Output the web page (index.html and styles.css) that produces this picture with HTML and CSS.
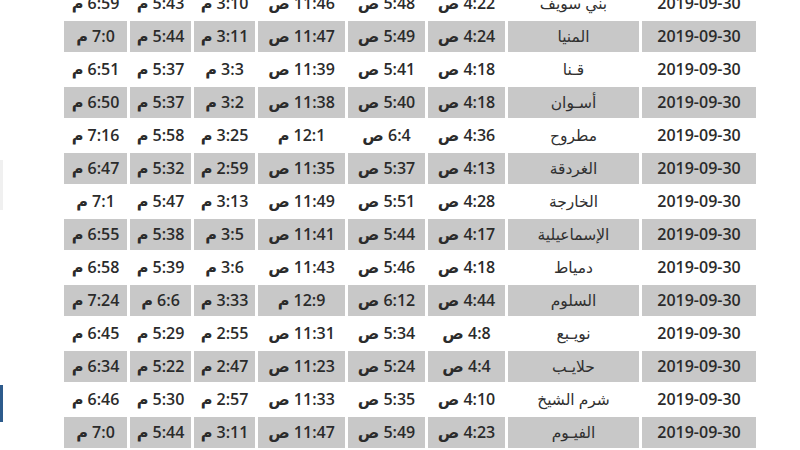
FILE: index.html
```html
<!DOCTYPE html>
<html lang="ar">
<head>
<meta charset="utf-8">
<link rel="stylesheet" href="styles.css">
</head>
<body>
<div class="page">
  <aside class="edge">
    <div class="edge-faint"></div>
    <div class="edge-blue"></div>
  </aside>
  <table class="times" dir="rtl">
    <colgroup>
      <col class="c-date"><col class="c-city"><col class="c-fajr"><col class="c-sun"><col class="c-dhuhr"><col class="c-asr"><col class="c-mag"><col class="c-isha">
    </colgroup>
    <tbody>
      <tr><td>2019-09-30</td><td class="city">بني سويف</td><td>4:22 ص</td><td>5:48 ص</td><td>11:46 ص</td><td>3:10 م</td><td>5:43 م</td><td>6:59 م</td></tr>
      <tr class="alt"><td>2019-09-30</td><td class="city">المنيا</td><td>4:24 ص</td><td>5:49 ص</td><td>11:47 ص</td><td>3:11 م</td><td>5:44 م</td><td>7:0 م</td></tr>
      <tr><td>2019-09-30</td><td class="city">قـنا</td><td>4:18 ص</td><td>5:41 ص</td><td>11:39 ص</td><td>3:3 م</td><td>5:37 م</td><td>6:51 م</td></tr>
      <tr class="alt"><td>2019-09-30</td><td class="city">أسـوان</td><td>4:18 ص</td><td>5:40 ص</td><td>11:38 ص</td><td>3:2 م</td><td>5:37 م</td><td>6:50 م</td></tr>
      <tr><td>2019-09-30</td><td class="city">مطروح</td><td>4:36 ص</td><td>6:4 ص</td><td>12:1 م</td><td>3:25 م</td><td>5:58 م</td><td>7:16 م</td></tr>
      <tr class="alt"><td>2019-09-30</td><td class="city">الغردقة</td><td>4:13 ص</td><td>5:37 ص</td><td>11:35 ص</td><td>2:59 م</td><td>5:32 م</td><td>6:47 م</td></tr>
      <tr><td>2019-09-30</td><td class="city">الخارجة</td><td>4:28 ص</td><td>5:51 ص</td><td>11:49 ص</td><td>3:13 م</td><td>5:47 م</td><td>7:1 م</td></tr>
      <tr class="alt"><td>2019-09-30</td><td class="city">الإسماعيلية</td><td>4:17 ص</td><td>5:44 ص</td><td>11:41 ص</td><td>3:5 م</td><td>5:38 م</td><td>6:55 م</td></tr>
      <tr><td>2019-09-30</td><td class="city">دمياط</td><td>4:18 ص</td><td>5:46 ص</td><td>11:43 ص</td><td>3:6 م</td><td>5:39 م</td><td>6:58 م</td></tr>
      <tr class="alt"><td>2019-09-30</td><td class="city">السلوم</td><td>4:44 ص</td><td>6:12 ص</td><td>12:9 م</td><td>3:33 م</td><td>6:6 م</td><td>7:24 م</td></tr>
      <tr><td>2019-09-30</td><td class="city">نويـبع</td><td>4:8 ص</td><td>5:34 ص</td><td>11:31 ص</td><td>2:55 م</td><td>5:29 م</td><td>6:45 م</td></tr>
      <tr class="alt"><td>2019-09-30</td><td class="city">حلايـب</td><td>4:4 ص</td><td>5:24 ص</td><td>11:23 ص</td><td>2:47 م</td><td>5:22 م</td><td>6:34 م</td></tr>
      <tr><td>2019-09-30</td><td class="city">شرم الشيخ</td><td>4:10 ص</td><td>5:35 ص</td><td>11:33 ص</td><td>2:57 م</td><td>5:30 م</td><td>6:46 م</td></tr>
      <tr class="alt"><td>2019-09-30</td><td class="city">الفيـوم</td><td>4:23 ص</td><td>5:49 ص</td><td>11:47 ص</td><td>3:11 م</td><td>5:44 م</td><td>7:0 م</td></tr>
    </tbody>
  </table>
</div>
</body>
</html>
```

FILE: styles.css
```css
html, body {
  margin: 0;
  padding: 0;
  background: #ffffff;
  overflow: hidden;
}

.page {
  display: flex;
  align-items: flex-start;
  width: 800px;
  height: 450px;
  overflow: hidden;
}

.edge {
  width: 3px;
  flex: 0 0 3px;
  display: flex;
  flex-direction: column;
}

.edge-faint {
  margin-top: 160px;
  height: 50px;
  background: #f0f0f0;
}

.edge-blue {
  margin-top: 175px;
  height: 37px;
  background: #2d5b8c;
}

.times {
  margin-top: -14px;
  margin-left: 58px;
  border-collapse: separate;
  border-spacing: 3px 2px;
  table-layout: fixed;
  width: 698px;
  font-family: "Open Sans", "DejaVu Sans", sans-serif;
  font-weight: 600;
  font-size: 16px;
  color: #2b2b2b;
}

.c-date { width: 114px; }
.c-city { width: 131px; }
.c-fajr { width: 77px; }
.c-sun { width: 77px; }
.c-dhuhr { width: 87px; }
.c-asr { width: 61px; }
.c-mag { width: 61px; }
.c-isha { width: 63px; }

.times td {
  height: 31px;
  padding: 0;
  text-align: center;
  vertical-align: middle;
  white-space: nowrap;
  line-height: 31px;
}

.times td.city {
  font-weight: 400;
  font-size: 15.5px;
  color: #303030;
}

.times tr.alt td {
  background: #c8c8c8;
}
```
